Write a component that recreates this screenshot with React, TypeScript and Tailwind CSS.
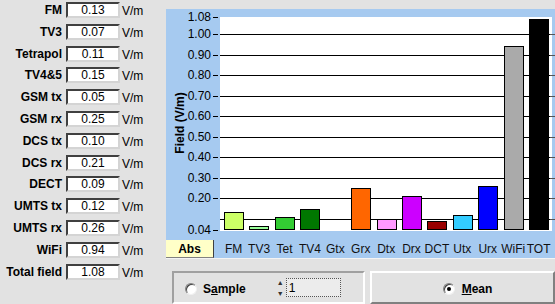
import React from "react";

const rows: [string, string][] = [
  ["FM", "0.13"],
  ["TV3", "0.07"],
  ["Tetrapol", "0.11"],
  ["TV4&5", "0.15"],
  ["GSM tx", "0.05"],
  ["GSM rx", "0.25"],
  ["DCS tx", "0.10"],
  ["DCS rx", "0.21"],
  ["DECT", "0.09"],
  ["UMTS tx", "0.12"],
  ["UMTS rx", "0.26"],
  ["WiFi", "0.94"],
  ["Total field", "1.08"],
];

const bars: { label: string; top: number | null; color: string }[] = [
  { label: "FM", top: 212, color: "#ccff66" },
  { label: "TV3", top: 226, color: "#99ff99" },
  { label: "Tet", top: 217, color: "#33cc33" },
  { label: "TV4", top: 209, color: "#007700" },
  { label: "Gtx", top: null, color: "#ffff00" },
  { label: "Grx", top: 188, color: "#ff6600" },
  { label: "Dtx", top: 219, color: "#ff99ff" },
  { label: "Drx", top: 196, color: "#cc00ff" },
  { label: "DCT", top: 221, color: "#990000" },
  { label: "Utx", top: 215, color: "#33ccff" },
  { label: "Urx", top: 186, color: "#0000ff" },
  { label: "WiFi", top: 46, color: "#aaaaaa" },
  { label: "TOT", top: 19, color: "#000000" },
];

const font = { fontFamily: '"Liberation Sans", Arial, sans-serif' };

function Chart() {
  // svg coords: x' = x - 166, y' = y - 9
  const gy = (v: number) => 34 + (1 - v) * 205 - 9;
  const grid = [0.1, 0.2, 0.3, 0.4, 0.5, 0.6, 0.7, 0.8, 0.9, 1.0];
  const labels: [string, number][] = [
    ["1.08", 17 - 9],
    ["1.00", gy(1.0)],
    ["0.90", gy(0.9)],
    ["0.80", gy(0.8)],
    ["0.70", gy(0.7)],
    ["0.60", gy(0.6)],
    ["0.50", gy(0.5)],
    ["0.40", gy(0.4)],
    ["0.30", gy(0.3)],
    ["0.20", gy(0.2)],
    ["0.04", 230 - 9],
  ];
  return (
    <svg width={389} height={231} className="block" style={font}>
      <rect x={54} y={8} width={332} height={214} fill="#ffffff" />
      {grid.map((v) => (
        <line
          key={v}
          x1={54}
          x2={386}
          y1={Math.round(gy(v)) + 0.5}
          y2={Math.round(gy(v)) + 0.5}
          stroke="#000"
          strokeWidth={1}
          shapeRendering="crispEdges"
        />
      ))}
      {grid.map((v) => (
        <line
          key={"r" + v}
          x1={384}
          x2={389}
          y1={Math.round(gy(v)) + 0.5}
          y2={Math.round(gy(v)) + 0.5}
          stroke="#555"
          strokeWidth={1}
          shapeRendering="crispEdges"
        />
      ))}
      {labels.map(([t, y]) => (
        <g key={t}>
          <line
            x1={47}
            x2={52}
            y1={Math.round(y) + 0.5}
            y2={Math.round(y) + 0.5}
            stroke="#000"
            shapeRendering="crispEdges"
          />
          <text x={45} y={y + 4} textAnchor="end" fontSize={12} fill="#000">
            {t}
          </text>
        </g>
      ))}
      {bars.map((b, i) => {
        if (b.top === null) return null;
        const x = Math.round(58 + i * 25.42) + 0.5;
        const top = b.top - 9 + 0.5;
        return (
          <rect
            key={b.label}
            x={x}
            y={top}
            width={19}
            height={220 - top}
            fill={b.color}
            stroke="#000"
            strokeWidth={1}
            shapeRendering="crispEdges"
          />
        );
      })}
      <text
        x={0}
        y={0}
        transform="translate(18 114) rotate(-90)"
        textAnchor="middle"
        fontSize={12}
        fontWeight="bold"
        fill="#000"
      >
        Field (V/m)
      </text>
    </svg>
  );
}

function Radio({ checked }: { checked: boolean }) {
  return (
    <span className="relative inline-block w-[12px] h-[12px] rounded-full bg-white border border-t-[#808080] border-l-[#808080] border-b-[#f0f0f0] border-r-[#f0f0f0] shadow-[inset_1px_1px_0_#404040]">
      {checked && (
        <span className="absolute left-[3px] top-[3px] w-[4px] h-[4px] rounded-full bg-black" />
      )}
    </span>
  );
}

export default function App() {
  return (
    <div
      className="w-[555px] h-[304px] bg-[#e2e2e2] flex overflow-hidden text-black"
      style={font}
    >
      <div className="w-[166px] pt-[2px] flex flex-col">
        {rows.map(([l, v]) => (
          <div key={l} className="h-[21.8px] flex items-start">
            <div className="w-[62px] h-[16px] flex items-center justify-end text-[12px] font-bold leading-none">
              {l}
            </div>
            <div className="ml-[4px] w-[54px] h-[16px] bg-white border-2 border-t-[#404040] border-l-[#404040] border-b-[#d4d4d4] border-r-[#d4d4d4] flex items-center justify-center text-[12px] leading-none">
              {v}
            </div>
            <div className="ml-[2px] h-[16px] flex items-center text-[12px] leading-none pt-[2px]">
              V/m
            </div>
          </div>
        ))}
      </div>
      <div className="flex-1 flex flex-col pt-[9px]">
        <div className="bg-[#a6caf0] h-[231px]">
          <Chart />
        </div>
        <div className="h-[19px] flex bg-[#a6caf0] border-b border-[#f4f4f4]">
          <div className="w-[48px] bg-[#ffffc8] border-r border-r-[#404040] border-b border-b-[#808080] flex items-center justify-center text-[12px] font-bold">
            Abs
          </div>
          <div className="flex pl-[7px] items-center">
            {bars.map((b) => (
              <div
                key={b.label}
                className="w-[25.42px] text-center text-[12px] leading-none text-[#111] whitespace-nowrap"
              >
                {b.label}
              </div>
            ))}
          </div>
        </div>
        <div className="flex mt-[12px] h-[40px]">
          <div className="ml-[6px] w-[193px] border-2 border-t-[#a0a0a0] border-l-[#a0a0a0] border-b-white border-r-white flex items-start pt-[5px]">
            <div className="ml-[11px] mt-[2px] flex items-center">
              <Radio checked={false} />
              <span className="ml-[6px] text-[12px] font-bold">
                S<span className="underline">a</span>mple
              </span>
            </div>
            <div className="ml-[30px] flex items-center">
              <div className="w-[9px] h-[18px] flex flex-col items-center justify-between text-[7px] leading-none text-[#333]">
                <span>▲</span>
                <span>▼</span>
              </div>
              <div className="ml-[1px] w-[55px] h-[19px] bg-[#ececec] border border-dotted border-[#555] text-[12px] leading-none pl-[2px] pt-[3px]">
                1
              </div>
            </div>
          </div>
          <div className="ml-[5px] flex-1 border-2 border-t-white border-l-white border-b-[#808080] border-r-[#808080] flex items-start justify-center pt-[7px] pl-[10px]">
            <div className="flex items-center">
              <Radio checked={true} />
              <span className="ml-[7px] text-[12px] font-bold">
                <span className="underline">M</span>ean
              </span>
            </div>
          </div>
        </div>
      </div>
    </div>
  );
}
